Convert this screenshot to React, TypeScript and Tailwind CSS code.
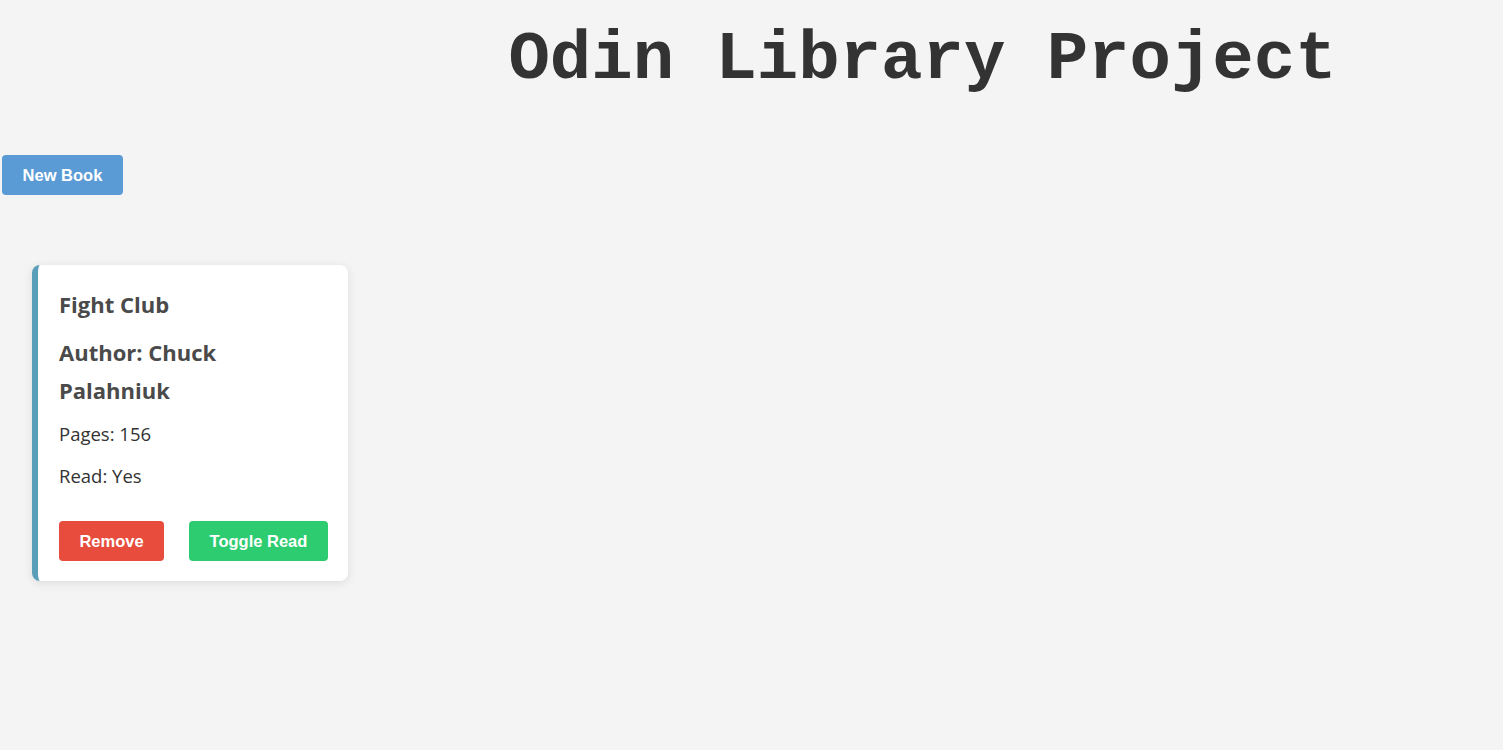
import React from 'react';

interface Book {
  title: string;
  author: string;
  pages: number;
  read: boolean;
}

const books: Book[] = [{ title: 'Fight Club', author: 'Chuck Palahniuk', pages: 156, read: true }];

export default function App() {
  return (
    <div className="min-h-[750px] bg-[#f4f4f4] text-[#333]" style={{ fontFamily: '"Open Sans", sans-serif' }}>
      {/* Header */}
      <div className="grid grid-cols-[342px_1fr]">
        <div></div>
        <h1 className="text-center text-[69px] font-bold leading-[120px] text-[#333]" style={{ fontFamily: '"Liberation Mono", monospace' }}>
          Odin Library Project
        </h1>
      </div>

      <div className="pt-[35px] pl-[2px]">
        <button
          className="h-[40px] w-[121px] rounded-[4px] bg-[#5b9bd5] text-[16.5px] font-bold text-white"
          style={{ fontFamily: '"Liberation Sans", Arial, sans-serif' }}
        >
          New Book
        </button>
      </div>

      {/* Book cards */}
      <div className="flex flex-wrap gap-6 pt-[70px] pl-[32px]">
        {books.map((book) => (
          <div
            key={book.title}
            className="w-[316px] rounded-[8px] border-l-[6px] border-[#5a9fba] bg-white pl-[21px] pr-[20px] pt-[20px] pb-[20px] shadow-[0_2px_10px_rgba(0,0,0,0.1)]"
          >
            <h3 className="text-[22px] font-bold leading-[38px] text-[#4a4a4a]">{book.title}</h3>
            <h3 className="mt-[10px] text-[22px] font-bold leading-[38px] text-[#4a4a4a]">Author: {book.author}</h3>
            <p className="mt-[11px] text-[18.5px] leading-[27px]">Pages: {book.pages}</p>
            <p className="mt-[15px] text-[18.5px] leading-[27px]">Read: {book.read ? 'Yes' : 'No'}</p>
            <div
              className="mt-[32px] flex justify-between text-[16.5px] font-bold text-white"
              style={{ fontFamily: '"Liberation Sans", Arial, sans-serif' }}
            >
              <button className="h-[40px] w-[105px] rounded-[4px] bg-[#e74c3c]">Remove</button>
              <button className="h-[40px] w-[139px] rounded-[4px] bg-[#2ecc71]">Toggle Read</button>
            </div>
          </div>
        ))}
      </div>
    </div>
  );
}
